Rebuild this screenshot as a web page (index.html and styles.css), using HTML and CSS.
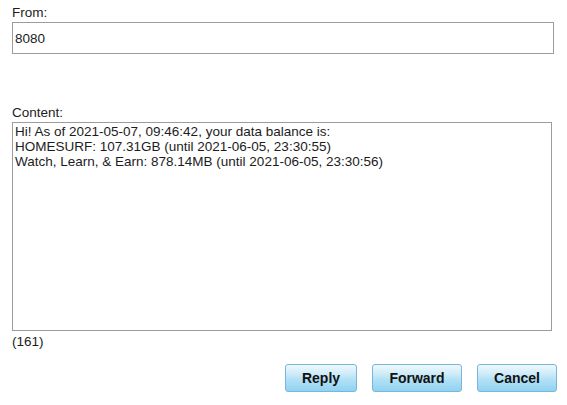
FILE: index.html
```html
<!DOCTYPE html>
<html lang="en">
<head>
    <meta charset="UTF-8">
    <meta name="viewport" content="width=device-width, initial-scale=1.0">
    <title>Message</title>
    <link rel="stylesheet" href="styles.css">
</head>
<body>
    <form class="message-form">
        <label class="field-label" for="from">From:</label>
        <input id="from" class="from-input" type="text" value="8080">

        <label class="field-label content-label" for="content">Content:</label>
        <textarea id="content" class="content-box">Hi! As of 2021-05-07, 09:46:42, your data balance is:
HOMESURF: 107.31GB (until 2021-06-05, 23:30:55)
Watch, Learn, &amp; Earn: 878.14MB (until 2021-06-05, 23:30:56)</textarea>
        <div class="char-count">(161)</div>

        <div class="actions">
            <button type="button" class="btn btn-reply">Reply</button>
            <button type="button" class="btn btn-forward">Forward</button>
            <button type="button" class="btn btn-cancel">Cancel</button>
        </div>
    </form>
</body>
</html>
```

FILE: styles.css
```css
:root {
    --text: #1c1c1c;
    --border-gray: #9c9c9c;
    --btn-border: #79b6dc;
}

* {
    box-sizing: border-box;
}

body {
    margin: 0;
    font-family: "Liberation Sans", Arial, sans-serif;
    font-size: 13.5px;
    color: var(--text);
    background: #fff;
}

.message-form {
    padding: 4px 10px 0 12px;
}

.field-label {
    display: block;
    line-height: 18px;
}

.content-label {
    margin-top: 50px;
}

.from-input {
    display: block;
    width: 542px;
    height: 32px;
    padding: 0 2px;
    border: 1px solid var(--border-gray);
    font-family: inherit;
    font-size: 13.5px;
    color: var(--text);
    outline: none;
}

.content-box {
    display: block;
    width: 540px;
    height: 209px;
    padding: 1px 2px;
    border: 1px solid var(--border-gray);
    font-family: inherit;
    font-size: 13.5px;
    line-height: 15px;
    color: var(--text);
    resize: none;
    outline: none;
}

.char-count {
    line-height: 18px;
    padding-top: 2px;
}

.actions {
    display: flex;
    justify-content: flex-end;
    gap: 15px;
    margin-top: 13px;
}

.btn {
    height: 28px;
    border: 1px solid var(--btn-border);
    border-radius: 3px;
    background: linear-gradient(#eef8fd 0%, #d3edf9 30%, #b3e1f6 55%, #90d2f2 100%);
    font-family: inherit;
    font-size: 14px;
    font-weight: bold;
    color: #111;
    cursor: pointer;
    padding: 0;
}

.btn-reply {
    width: 72px;
}

.btn-forward {
    width: 90px;
}

.btn-cancel {
    width: 80px;
}
```
